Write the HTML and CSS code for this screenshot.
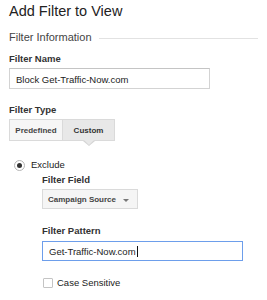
FILE: index.html
```html
<!DOCTYPE html>
<html lang="en">
<head>
  <meta charset="UTF-8" />
  <meta name="viewport" content="width=device-width, initial-scale=1.0"/>
  <title>Add Filter to View</title>
  <link rel="stylesheet" href="styles.css">
</head>
<body>
  <h1 class="page-title">Add Filter to View</h1>

  <div class="section-head">
    <span>Filter Information</span>
    <div class="section-line"></div>
  </div>

  <div class="label">Filter Name</div>
  <div class="field">Block Get-Traffic-Now.com</div>

  <div class="label label-type">Filter Type</div>
  <div class="tabs">
    <div class="tab">Predefined</div>
    <div class="tab active">Custom</div>
  </div>

  <div class="radio-row">
    <span class="radio checked"></span>
    <span>Exclude</span>
  </div>

  <!-- вложенный блок под радиокнопкой -->
  <div class="nested">
    <div class="label label-field">Filter Field</div>
    <div class="dropdown">Campaign Source</div>

    <div class="label label-pattern">Filter Pattern</div>
    <div class="field field-focus">Get-Traffic-Now.com<span class="caret"></span></div>

    <div class="check-row">
      <span class="checkbox"></span>
      <span>Case Sensitive</span>
    </div>
  </div>
</body>
</html>
```

FILE: styles.css
```css
body {
  margin: 0;
  padding: 0 9px;
  font-family: "Liberation Sans", Arial, sans-serif;
  font-size: 9.5px;
  color: #222;
  background-color: #ffffff;
}

.page-title {
  margin: 1px 0 0;
  font-size: 14.5px;
  font-weight: normal;
  line-height: 20px;
  color: #222;
}

/* Заголовок секции с линией справа */
.section-head {
  display: flex;
  align-items: flex-start;
  margin-top: 9px;
  font-size: 11px;
  line-height: 14px;
  color: #444;
}

.section-line {
  flex: 1;
  margin: 8px 0 0 7px;
  border-top: 1px solid #e2e2e2;
}

.label {
  margin-top: 9px;
  font-weight: bold;
  line-height: 12px;
  color: #333;
}

.label-type {
  margin-top: 15px;
}

.label-field {
  margin-top: 3px;
}

.label-pattern {
  margin-top: 16px;
}

.field {
  box-sizing: border-box;
  width: 201px;
  height: 21px;
  margin-top: 3px;
  padding: 2px 6px 0;
  line-height: 17px;
  border: 1px solid #d3d3d3;
  border-top-color: #c4c4c4;
  color: #222;
}

.field-focus {
  height: 20px;
  margin-top: 4px;
  padding-top: 1px;
  line-height: 17px;
  border-color: #6d9eeb;
}

.caret {
  display: inline-block;
  width: 1px;
  height: 11px;
  margin-left: 1px;
  vertical-align: -2px;
  background-color: #111;
}

/* ---------- Переключатель Predefined / Custom ---------- */
.tabs {
  display: flex;
  margin-top: 3px;
}

.tab {
  position: relative;
  box-sizing: border-box;
  height: 22px;
  width: 54px;
  padding-top: 2px;
  line-height: 18px;
  text-align: center;
  font-size: 8px;
  font-weight: bold;
  color: #444;
  background-color: #f6f6f6;
  border: 1px solid #dadada;
}

.tab.active {
  width: 52px;
  border-left: none;
  background-color: #e8e8e8;
  color: #333;
}

/* Стрелочка под активной вкладкой */
.tab.active::before,
.tab.active::after {
  content: '';
  position: absolute;
  left: 50%;
  width: 0;
  height: 0;
  transform: translateX(-50%);
}

.tab.active::before {
  top: 21px;
  border-left: 6px solid transparent;
  border-right: 6px solid transparent;
  border-top: 5px solid #d4d4d4;
}

.tab.active::after {
  top: 20px;
  border-left: 5px solid transparent;
  border-right: 5px solid transparent;
  border-top: 5px solid #e8e8e8;
}

/* ---------- Радио ---------- */
.radio-row {
  display: flex;
  align-items: flex-start;
  margin: 18px 0 0 5px;
  line-height: 12px;
}

.radio {
  box-sizing: border-box;
  display: flex;
  align-items: center;
  justify-content: center;
  width: 11px;
  height: 11px;
  margin: 1px 6px 0 0;
  border: 1px solid #b5b5b5;
  border-radius: 50%;
  background-color: #fff;
}

.radio.checked::after {
  content: '';
  width: 5px;
  height: 5px;
  border-radius: 50%;
  background-color: #333;
}

.nested {
  margin-left: 33px;
}

/* ---------- Выпадающий список ---------- */
.dropdown {
  position: relative;
  box-sizing: border-box;
  width: 96px;
  height: 20px;
  margin-top: 3px;
  padding: 1px 0 0 5px;
  line-height: 18px;
  font-size: 8px;
  font-weight: bold;
  color: #444;
  background-color: #f5f5f5;
  border: 1px solid #dadada;
}

.dropdown::after {
  content: '';
  position: absolute;
  top: 9px;
  right: 8px;
  width: 0;
  height: 0;
  border-left: 3px solid transparent;
  border-right: 3px solid transparent;
  border-top: 3px solid #777;
}

/* ---------- Чекбокс ---------- */
.check-row {
  display: flex;
  align-items: center;
  margin-top: 16px;
  line-height: 12px;
}

.checkbox {
  box-sizing: border-box;
  width: 10px;
  height: 10px;
  margin: 0 4px 0 1px;
  border: 1px solid #c4c4c4;
  border-radius: 1px;
  background-color: #fff;
}
```
